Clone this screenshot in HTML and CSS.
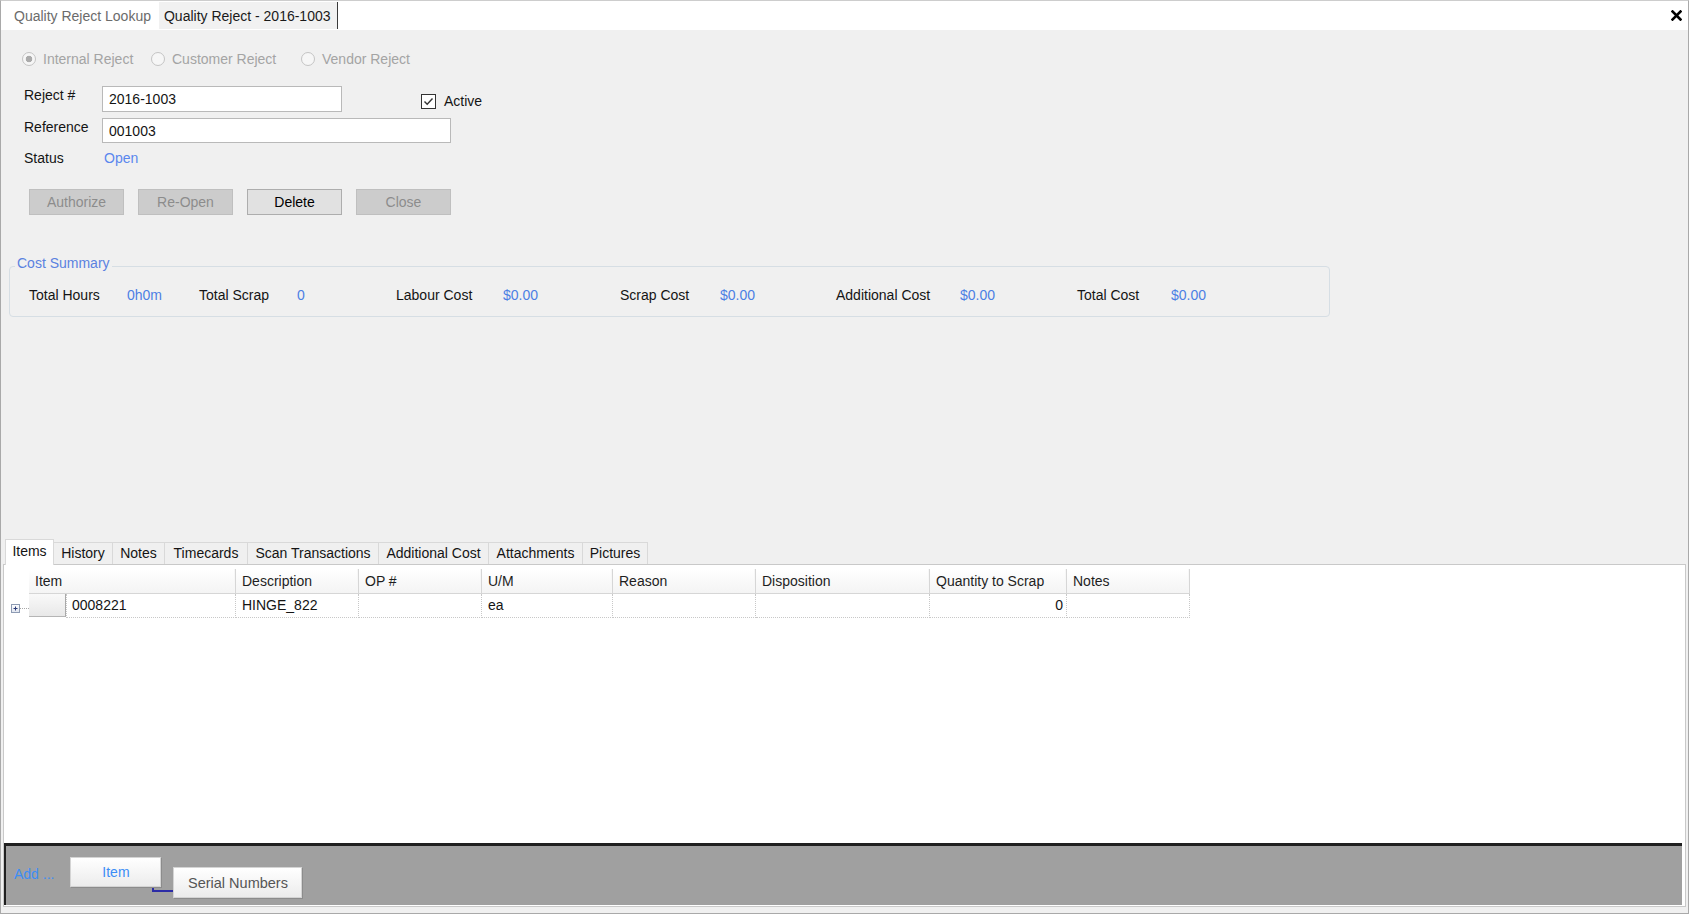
FILE: index.html
```html
<!DOCTYPE html>
<html>
<head>
<meta charset="utf-8">
<title>Quality Reject - 2016-1003</title>
<link rel="stylesheet" href="styles.css">
</head>
<body>
<div class="window">
  <div class="doctabs">
    <div class="doctab">Quality Reject Lookup</div>
    <div class="doctab doctab-active">Quality Reject - 2016-1003</div>
    <div class="doc-close">
      <svg width="11" height="11" viewBox="0 0 11 11"><path d="M1.5 1.5 L9.5 9.5 M9.5 1.5 L1.5 9.5" stroke="#000" stroke-width="2.6" stroke-linecap="square"/></svg>
    </div>
  </div>

  <div class="form">
    <div class="radios">
      <div class="radio radio-internal"><span class="circle circle-checked"></span>Internal Reject</div>
      <div class="radio radio-customer"><span class="circle"></span>Customer Reject</div>
      <div class="radio"><span class="circle"></span>Vendor Reject</div>
    </div>

    <div class="field-row row-reject">
      <span class="flabel">Reject #</span>
      <div class="input input-reject">2016-1003</div>
      <div class="check">
        <span class="check-box"><svg width="13" height="13" viewBox="0 0 13 13"><path d="M2.5 6.5 L5.2 9.3 L10.5 3.5" fill="none" stroke="#333" stroke-width="1.4"/></svg></span>
        Active
      </div>
    </div>

    <div class="field-row row-ref">
      <span class="flabel">Reference</span>
      <div class="input input-ref">001003</div>
    </div>

    <div class="field-row row-status">
      <span class="flabel">Status</span>
      <span class="status">Open</span>
    </div>

    <div class="buttons">
      <div class="btn btn-disabled">Authorize</div>
      <div class="btn btn-disabled">Re-Open</div>
      <div class="btn">Delete</div>
      <div class="btn btn-disabled">Close</div>
    </div>

    <div class="group">
      <div class="group-title">Cost Summary</div>
      <div class="cost-row">
        <span>Total Hours</span><span class="val">0h0m</span>
        <span>Total Scrap</span><span class="val">0</span>
        <span>Labour Cost</span><span class="val">$0.00</span>
        <span>Scrap Cost</span><span class="val">$0.00</span>
        <span>Additional Cost</span><span class="val">$0.00</span>
        <span>Total Cost</span><span class="val">$0.00</span>
      </div>
    </div>
  </div>

  <div class="lower">
    <div class="tabs">
      <div class="tab tab-sel tab-items">Items</div>
      <div class="tab tab-history">History</div>
      <div class="tab tab-notes">Notes</div>
      <div class="tab tab-timecards">Timecards</div>
      <div class="tab tab-scan">Scan Transactions</div>
      <div class="tab tab-addcost">Additional Cost</div>
      <div class="tab tab-attach">Attachments</div>
      <div class="tab tab-pictures">Pictures</div>
    </div>
    <div class="tabpage">
      <div class="grid">
        <div class="grid-head">
          <div class="gh-spacer"></div>
          <div class="gh col-item">Item</div>
          <div class="gh col-desc">Description</div>
          <div class="gh col-op">OP #</div>
          <div class="gh col-um">U/M</div>
          <div class="gh col-reason">Reason</div>
          <div class="gh col-disp">Disposition</div>
          <div class="gh col-qty">Quantity to Scrap</div>
          <div class="gh col-notes">Notes</div>
        </div>
        <div class="grid-row">
          <div class="expander">
            <svg width="25" height="24" viewBox="0 0 25 24">
              <defs><linearGradient id="eg" x1="0" y1="0" x2="0" y2="1"><stop offset="0" stop-color="#ffffff"/><stop offset="1" stop-color="#dfe4ee"/></linearGradient></defs>
              <rect x="7.5" y="10.5" width="8" height="8" fill="url(#eg)" stroke="#8d9bb3"/>
              <path d="M9.5 14.5 H13.5 M11.5 12.5 V16.5" stroke="#2d3d78" stroke-width="1"/>
              <path d="M16 14.5 H25" stroke="#a8a8a8" stroke-width="1" stroke-dasharray="1 1"/>
            </svg>
          </div>
          <div class="rowsel"></div>
          <div class="gc col-itemdata">0008221</div>
          <div class="gc col-desc">HINGE_822</div>
          <div class="gc col-op"></div>
          <div class="gc col-um">ea</div>
          <div class="gc col-reason"></div>
          <div class="gc col-disp"></div>
          <div class="gc col-qty gc-num">0</div>
          <div class="gc col-notes"></div>
        </div>
      </div>
      <div class="addbar">
        <span class="add-label">Add ...</span>
        <div class="node node-item">Item</div>
        <div class="node node-serial">Serial Numbers</div>
        <div class="connector"></div>
      </div>
    </div>
  </div>
</div>
</body>
</html>
```

FILE: styles.css
```css
html, body {
  margin: 0;
  padding: 0;
}

body {
  background: #f0f0f0;
  font-family: "Liberation Sans", Arial, sans-serif;
  font-size: 14px;
  color: #141414;
}

.window {
  width: 1689px;
  height: 914px;
  box-sizing: border-box;
  border: 1px solid #a9a9a9;
  border-top-color: #cdcdcd;
  background: #f0f0f0;
  display: flex;
  flex-direction: column;
  overflow: hidden;
}

/* document tabs */
.doctabs {
  height: 29px;
  flex: none;
  background: #ffffff;
  display: flex;
  align-items: stretch;
}

.doctab {
  line-height: 16px;
  padding: 7px 8px 6px 13px;
  color: #6b6b6b;
}

.doctab-active {
  margin: 1px 0;
  padding: 6px 6px 5px 5px;
  background: #f1f1f1;
  color: #1a1a1a;
  border-right: 1px solid #3a3a3a;
}

.doc-close {
  margin-left: auto;
  margin-right: 6px;
  display: flex;
  align-items: center;
}

/* form */
.form {
  flex: none;
  padding-left: 8px;
  display: flex;
  flex-direction: column;
  align-items: flex-start;
}

.radios {
  display: flex;
  margin: 21px 0 0 13px;
  line-height: 16px;
  color: #a4a4a4;
}

.radio {
  display: flex;
  align-items: center;
  gap: 7px;
}

.radio-internal {
  width: 129px;
}

.radio-customer {
  width: 150px;
}

.circle {
  width: 14px;
  height: 14px;
  box-sizing: border-box;
  border: 1px solid #c4c4c4;
  border-radius: 50%;
  background: #f6f6f6;
}

.circle-checked {
  background: radial-gradient(circle, #ababab 0 3px, #f6f6f6 3.6px);
}

.field-row {
  display: flex;
  align-items: flex-start;
  margin-left: 15px;
}

.row-reject {
  margin-top: 19px;
}

.row-ref {
  margin-top: 6px;
}

.row-status {
  margin-top: 7px;
  line-height: 16px;
}

.flabel {
  width: 78px;
  line-height: 16px;
  padding-top: 1px;
  color: #141414;
}

.row-status .flabel {
  padding-top: 0;
}

.input {
  box-sizing: border-box;
  background: #ffffff;
  border: 1px solid #b9b9b9;
  padding: 0 6px;
  color: #141414;
}

.input-reject {
  width: 240px;
  height: 26px;
  line-height: 24px;
}

.input-ref {
  width: 349px;
  height: 25px;
  line-height: 24px;
}

.check {
  margin: 7px 0 0 79px;
  display: flex;
  align-items: center;
  gap: 8px;
  line-height: 16px;
}

.check-box {
  width: 15px;
  height: 15px;
  box-sizing: border-box;
  border: 1px solid #333333;
  background: #ffffff;
  display: flex;
}

.status {
  padding-left: 2px;
  color: #5a87ee;
}

.buttons {
  display: flex;
  gap: 14px;
  margin: 23px 0 0 20px;
}

.btn {
  width: 95px;
  height: 26px;
  box-sizing: border-box;
  border: 1px solid #adadad;
  background: #e1e1e1;
  display: flex;
  align-items: center;
  justify-content: center;
  color: #000000;
}

.btn-disabled {
  background: #cccccc;
  border-color: #bfbfbf;
  color: #8c8c8c;
}

/* cost summary group */
.group {
  position: relative;
  margin-top: 51px;
  width: 1321px;
  height: 51px;
  box-sizing: border-box;
  border: 1px solid #d6dee4;
  border-radius: 4px;
}

.group-title {
  position: absolute;
  top: -12px;
  left: 5px;
  padding: 0 2px;
  background: #f0f0f0;
  line-height: 16px;
  color: #5b82e0;
}

.cost-row {
  display: grid;
  grid-template-columns: 98px 72px 98px 99px 107px 117px 100px 116px 124px 117px 94px auto;
  padding: 20px 0 0 19px;
  line-height: 16px;
  color: #141414;
}

.cost-row .val {
  color: #4c7fe4;
}

/* lower tab control */
.lower {
  margin-top: auto;
  margin-bottom: 6px;
  padding: 0 2px;
  flex: none;
}

.tabs {
  display: flex;
  align-items: flex-end;
  height: 25px;
  padding-left: 2px;
  position: relative;
  z-index: 1;
}

.tab {
  height: 22px;
  box-sizing: border-box;
  padding: 0;
  text-align: center;
  line-height: 21px;
  background: #f0f0f0;
  border: 1px solid #d9d9d9;
  border-left: none;
  border-bottom: none;
  color: #141414;
  white-space: nowrap;
}

.tab-sel {
  height: 26px;
  margin-bottom: -1px;
  line-height: 16px;
  padding-top: 3px;
  background: #ffffff;
  border-left: 1px solid #d9d9d9;
}

.tab-items { width: 49px; }
.tab-history { width: 59px; }
.tab-notes { width: 52px; }
.tab-timecards { width: 83px; }
.tab-scan { width: 131px; }
.tab-addcost { width: 110px; }
.tab-attach { width: 94px; }
.tab-pictures { width: 65px; }

.tabpage {
  height: 343px;
  box-sizing: border-box;
  border: 1px solid #c9c9c9;
  background: #ffffff;
  display: flex;
  flex-direction: column;
  padding-bottom: 1px;
}

.grid {
  height: 278px;
  box-sizing: border-box;
  padding-top: 4px;
  flex: none;
}

.grid-head {
  display: flex;
  height: 25px;
}

.gh-spacer {
  width: 25px;
}

.gh {
  box-sizing: border-box;
  height: 25px;
  padding-left: 6px;
  line-height: 24px;
  background: linear-gradient(#ffffff, #f4f4f4);
  border-right: 1px solid #d6d6d6;
  border-bottom: 1px solid #d6d6d6;
  box-shadow: inset -1px 0 0 #f7f7f7;
  color: #1e1e1e;
}

.col-item { width: 207px; }
.col-itemdata { width: 170px; padding-left: 5px !important; }
.col-desc { width: 123px; }
.col-op { width: 123px; }
.col-um { width: 131px; }
.col-reason { width: 143px; }
.col-disp { width: 174px; }
.col-qty { width: 137px; }
.col-notes { width: 123px; }

.grid-row {
  display: flex;
  height: 24px;
}

.expander {
  width: 25px;
  height: 24px;
}

.rowsel {
  width: 37px;
  height: 23px;
  box-sizing: border-box;
  background: linear-gradient(#f9f9f9, #e8e8e8);
  border-right: 1px solid #a9a9a9;
  border-bottom: 1px solid #b5b5b5;
}

.gc {
  box-sizing: border-box;
  height: 24px;
  padding: 3px 0 0 6px;
  line-height: 16px;
  border-right: 1px dotted #c8c8c8;
  border-bottom: 1px dotted #c8c8c8;
  color: #141414;
}

.col-itemdata {
  border-left: 1px dotted #c8c8c8;
}

.gc-num {
  text-align: right;
  padding-right: 3px;
}

/* add bar */
.addbar {
  height: 62px;
  box-sizing: border-box;
  margin-right: 3px;
  border-top: 3px solid #1f1f1f;
  border-left: 2px solid #1f1f1f;
  background: #a0a0a0;
  position: relative;
  display: flex;
  align-items: flex-start;
  padding-left: 8px;
  flex: none;
}

.add-label {
  margin-top: 20px;
  line-height: 16px;
  color: #3c8ef6;
}

.node {
  box-sizing: border-box;
  display: flex;
  align-items: center;
  justify-content: center;
  background: linear-gradient(#ffffff, #ececec);
  border: 1px solid #d4d4d4;
  box-shadow: 1px 1px 0 #8c8c8c;
  position: relative;
  z-index: 1;
}

.node-item {
  width: 91px;
  height: 30px;
  margin: 11px 0 0 16px;
  color: #3c8ef6;
}

.node-serial {
  width: 129px;
  height: 31px;
  margin: 21px 0 0 12px;
  color: #555555;
  font-size: 14.5px;
}

.connector {
  position: absolute;
  left: 146px;
  top: 40px;
  width: 21px;
  height: 4px;
  border-left: 2px solid #2c2ca6;
  border-bottom: 2px solid #2c2ca6;
}
```
